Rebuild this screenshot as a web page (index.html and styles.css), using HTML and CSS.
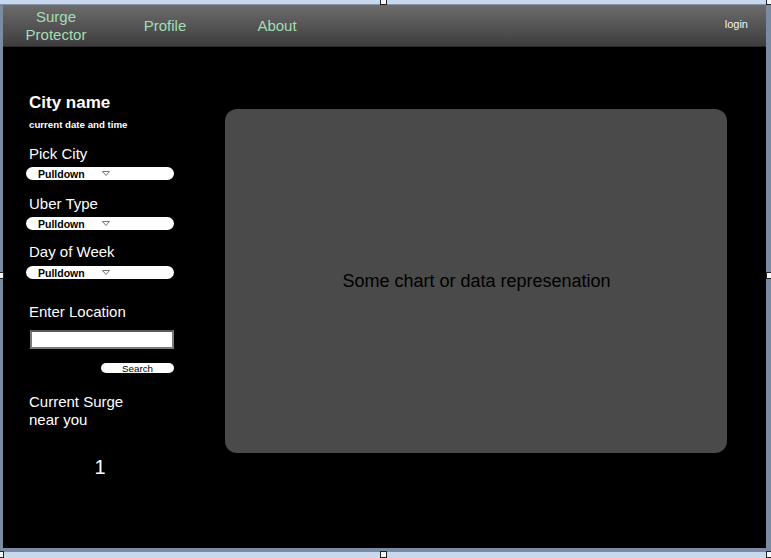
FILE: index.html
```html
<!DOCTYPE html>
<html>
<head>
<meta charset="utf-8">
<link rel="stylesheet" href="styles.css">
</head>
<body>
<div class="frame">
  <header class="nav">
    <a class="nav-item brand">Surge<br>Protector</a>
    <a class="nav-item">Profile</a>
    <a class="nav-item">About</a>
    <a class="login">login</a>
  </header>
  <main class="main">
    <aside class="sidebar">
      <h1 class="city">City name</h1>
      <div class="datetime">current date and time</div>

      <div class="label first">Pick City</div>
      <div class="pulldown"><span>Pulldown</span><svg class="caret" width="8" height="5" viewBox="0 0 8 5"><path d="M0.5 0.5 H7.5 L4 4.5 Z" fill="none" stroke="#777" stroke-width="1"/></svg></div>

      <div class="label">Uber Type</div>
      <div class="pulldown"><span>Pulldown</span><svg class="caret" width="8" height="5" viewBox="0 0 8 5"><path d="M0.5 0.5 H7.5 L4 4.5 Z" fill="none" stroke="#777" stroke-width="1"/></svg></div>

      <div class="label dow">Day of Week</div>
      <div class="pulldown"><span>Pulldown</span><svg class="caret" width="8" height="5" viewBox="0 0 8 5"><path d="M0.5 0.5 H7.5 L4 4.5 Z" fill="none" stroke="#777" stroke-width="1"/></svg></div>

      <div class="label loc">Enter Location</div>
      <div class="input"></div>
      <div class="search-row"><div class="search">Search</div></div>

      <div class="surge-label">Current Surge<br>near you</div>
      <div class="surge-value">1</div>
    </aside>
    <section class="chart">
      <p>Some chart or data represenation</p>
    </section>
  </main>
</div>
<div class="handle h-tm"></div>
<div class="handle h-tr"></div>
<div class="handle h-ml"></div>
<div class="handle h-mr"></div>
<div class="handle h-bl"></div>
<div class="handle h-bm"></div>
<div class="handle h-br"></div>
</body>
</html>
```

FILE: styles.css
```css
html, body {
  margin: 0;
  padding: 0;
}
body {
  width: 771px;
  height: 558px;
  background: #c9d8ec;
  font-family: "Liberation Sans", Arial, sans-serif;
  position: relative;
  overflow: hidden;
}
.frame {
  margin-top: 4px;
  width: 763px;
  height: 543px;
  border-top: 1px solid #8797ab;
  border-left: 3px solid #7b8ca2;
  border-right: 5px solid #7b8ca2;
  border-bottom: 4px solid #7b8ca2;
  background: #000;
  display: flex;
  flex-direction: column;
}
.nav {
  height: 41px;
  flex: none;
  display: flex;
  align-items: center;
  background: linear-gradient(#6c6c6c, #3d3d3d);
  border-bottom: 1px solid #2a2a2a;
}
.nav-item {
  width: 112px;
  text-align: center;
  color: #a6dcb6;
  font-size: 15px;
  line-height: 18px;
}
.nav-item.brand {
  width: 106px;
}
.login {
  margin-left: auto;
  margin-right: 18px;
  color: #f2f2f2;
  font-size: 11px;
  margin-top: -3px;
}
.main {
  flex: 1;
  display: flex;
  align-items: flex-start;
}
.sidebar {
  width: 148px;
  padding-left: 23px;
  padding-top: 45px;
  color: #fff;
  flex: none;
}
.city {
  margin: 0 0 0 3px;
  font-size: 17px;
  line-height: 22px;
  font-weight: bold;
}
.datetime {
  margin: 5px 0 0 3px;
  font-size: 9.7px;
  line-height: 12px;
  font-weight: bold;
}
.label {
  margin: 15px 0 4px 3px;
  font-size: 15px;
  line-height: 18px;
}
.label.first { margin-top: 14px; }
.label.dow { margin-top: 13px; margin-bottom: 5px; }
.label.loc { margin-top: 24px; margin-bottom: 9px; }
.pulldown {
  height: 13px;
  background: #fff;
  border-radius: 7px;
  display: flex;
  align-items: center;
  padding-left: 12px;
  color: #000;
  font-size: 10.5px;
  font-weight: bold;
}
.pulldown span {
  width: 64px;
}
.caret {
  display: block;
}
.input {
  margin-left: 4px;
  width: 140px;
  height: 15px;
  background: #fff;
  border: 2px solid #7a7a7a;
  border-top-color: #5a5a5a;
}
.search-row {
  display: flex;
  justify-content: flex-end;
  margin-top: 14px;
}
.search {
  width: 73px;
  height: 10px;
  background: #fff;
  border-radius: 5px;
  color: #000;
  font-size: 9.8px;
  line-height: 11px;
  text-align: center;
}
.surge-label {
  margin: 20px 0 0 3px;
  font-size: 15px;
  line-height: 18px;
}
.surge-value {
  margin-top: 26px;
  width: 148px;
  text-align: center;
  font-size: 20px;
  line-height: 24px;
}
.chart {
  margin: 62px 39px 0 51px;
  width: 502px;
  height: 344px;
  background: #4a4a4a;
  border-radius: 12px;
  display: flex;
  align-items: center;
  justify-content: center;
}
.chart p {
  margin: 0 0 0 1px;
  color: #000;
  font-size: 18px;
}
.handle {
  position: absolute;
  width: 5px;
  height: 5px;
  background: #f4f6fa;
  border: 1px solid #222;
}
.h-tm { left: 380px; top: -2px; }
.h-tr { left: 766px; top: -2px; }
.h-ml { left: -3px; top: 272px; }
.h-mr { left: 766px; top: 272px; }
.h-bl { left: -3px; top: 551px; }
.h-bm { left: 380px; top: 551px; }
.h-br { left: 766px; top: 551px; }
```
